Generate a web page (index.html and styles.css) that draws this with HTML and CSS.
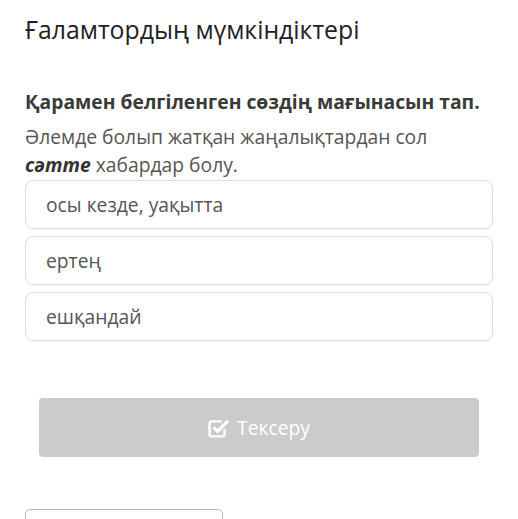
FILE: index.html
```html
<!DOCTYPE html>
<html lang="kk">
<head>
<meta charset="utf-8">
<link rel="stylesheet" href="styles.css">
</head>
<body>
<div class="page">
  <h1 class="title">Ғаламтордың мүмкіндіктері</h1>
  <h2 class="question">Қарамен белгіленген сөздің мағынасын тап.</h2>
  <p class="prompt">Әлемде болып жатқан жаңалықтардан сол <b><i>сәтте</i></b> хабардар болу.</p>
  <div class="options">
    <div class="option">осы кезде, уақытта</div>
    <div class="option">ертең</div>
    <div class="option">ешқандай</div>
  </div>
  <div class="check-wrap">
    <button class="check">
      <svg class="icon" viewBox="0 0 20 18" width="22" height="20" aria-hidden="true">
        <path d="M15 10v5a1.6 1.6 0 0 1-1.6 1.6H3A1.6 1.6 0 0 1 1.4 15V4.6A1.6 1.6 0 0 1 3 3h9.5" fill="none" stroke="#fff" stroke-width="2.2"/>
        <path d="M5 8.5l3.6 3.6 9.6-9.6" fill="none" stroke="#fff" stroke-width="2.8" stroke-linejoin="round"/>
      </svg>
      <span>Тексеру</span>
    </button>
  </div>
  <div class="next-box"></div>
</div>
</body>
</html>
```
FILE: styles.css
```css
html, body {
  margin: 0;
  padding: 0;
  background: #fff;
}
body {
  font-family: "Open Sans", "Noto Sans", sans-serif;
  color: #555;
  overflow: hidden;
}
.page {
  padding: 13px 25px 0 25px;
}
.title {
  margin: 0;
  font-size: 24.8px;
  font-weight: 400;
  line-height: 33px;
  color: #222;
}
.question {
  margin: 43px 0 0 0;
  font-size: 19.3px;
  font-weight: 700;
  line-height: 26px;
  color: #3a3a3a;
}
.prompt {
  margin: 8px 0 0 0;
  font-size: 19.3px;
  line-height: 28px;
  color: #555;
}
.prompt b {
  color: #333;
}
.options {
  display: flex;
  flex-direction: column;
  gap: 7px;
  margin-top: 1px;
}
.option {
  height: 47px;
  border: 1px solid #dedede;
  border-radius: 8px;
  padding: 0 20px;
  display: flex;
  align-items: center;
  font-size: 19.3px;
  color: #555;
  box-shadow: 0 1px 1px rgba(0,0,0,0.03);
}
.check-wrap {
  padding: 57px 14px 0 14px;
}
.check {
  width: 100%;
  height: 59px;
  border: none;
  border-radius: 4px;
  background: #cbcbcb;
  color: #fff;
  font-family: "Open Sans", "Noto Sans", sans-serif;
  font-size: 19.3px;
  display: flex;
  align-items: center;
  justify-content: center;
  gap: 7px;
  padding: 0;
}
.icon {
  display: block;
}
.next-box {
  margin-top: 52px;
  width: 196px;
  height: 30px;
  border: 1px solid #b8bcc2;
  border-radius: 5px;
}
```
